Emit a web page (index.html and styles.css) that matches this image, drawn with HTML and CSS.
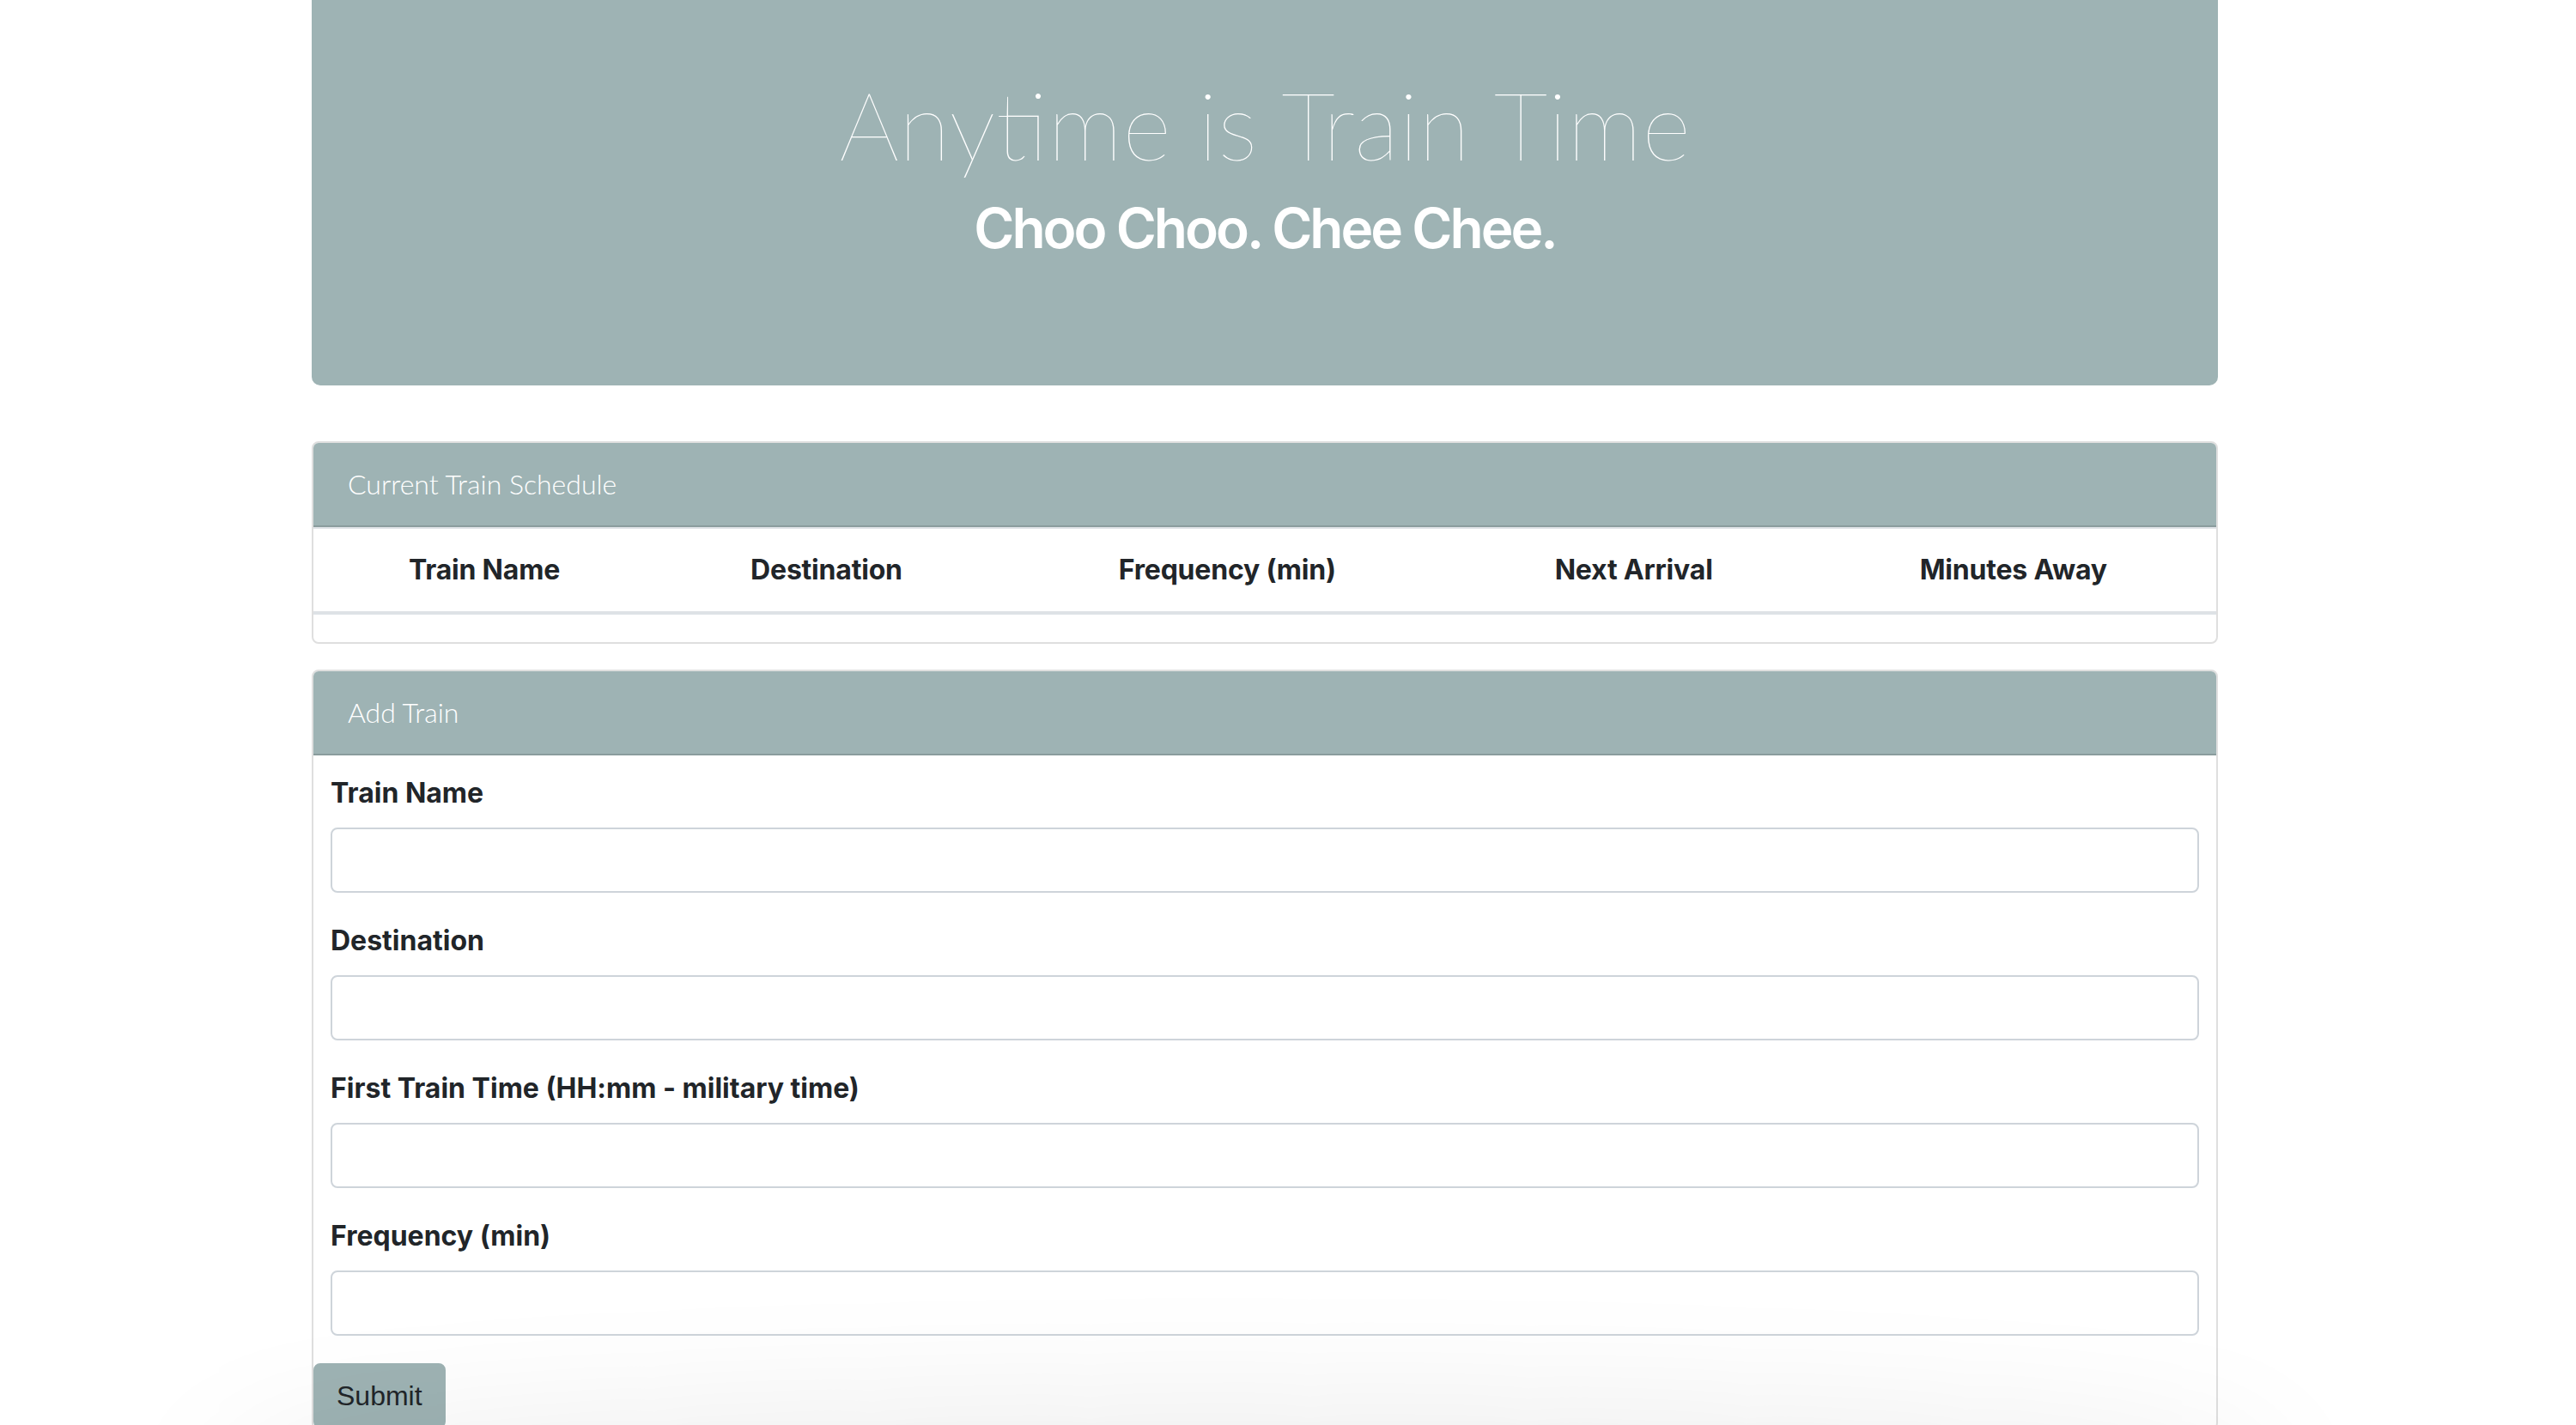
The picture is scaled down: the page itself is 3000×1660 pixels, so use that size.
FILE: index.html
```html
<!DOCTYPE html>
<html lang="en">
<head>
<meta charset="utf-8">
<title>Train Scheduler</title>
<link rel="stylesheet" href="styles.css">
</head>
<body>
<div class="container">
  <header class="jumbotron">
    <h1 class="title">Anytime is Train Time</h1>
    <h2 class="subtitle">Choo Choo. Chee Chee.</h2>
  </header>

  <section class="card">
    <div class="card-header">Current Train Schedule</div>
    <table class="table">
      <thead>
        <tr>
          <th>Train Name</th>
          <th>Destination</th>
          <th>Frequency (min)</th>
          <th>Next Arrival</th>
          <th>Minutes Away</th>
        </tr>
      </thead>
      <tbody></tbody>
    </table>
  </section>

  <section class="card">
    <div class="card-header">Add Train</div>
    <form class="train-form">
      <div class="fields">
        <div class="form-group">
          <label class="label">Train Name</label>
          <input class="form-control" type="text">
        </div>
        <div class="form-group">
          <label class="label">Destination</label>
          <input class="form-control" type="text">
        </div>
        <div class="form-group">
          <label class="label">First Train Time (HH:mm - military time)</label>
          <input class="form-control" type="text">
        </div>
        <div class="form-group">
          <label class="label">Frequency (min)</label>
          <input class="form-control" type="text">
        </div>
      </div>
      <button class="btn" type="button">Submit</button>
    </form>
  </section>
</div>
<div class="shade"></div>
</body>
</html>
```

FILE: styles.css
```css
html, body {
  margin: 0;
  padding: 0;
  background: #ffffff;
}

body {
  font-family: Inter, "Noto Sans", sans-serif;
  color: #212529;
  font-size: 32px;
  line-height: 1.5;
}

.container {
  width: 2220px;
  margin-left: 363px;
}

.jumbotron {
  background: #9eb3b4;
  border-radius: 0 0 10px 10px;
  padding: 78px 64px 128px;
  margin-bottom: 65px;
  text-align: center;
  color: #ffffff;
}

.title {
  margin: 0;
  font-family: Lato, sans-serif;
  font-weight: 200;
  font-size: 110px;
  line-height: 1.2;
}

.subtitle {
  margin: 18px 0 16px;
  font-family: Inter, sans-serif;
  font-weight: 600;
  font-size: 64px;
  line-height: 1.2;
  letter-spacing: -3px;
}

.card {
  border: 2px solid #dfdfdf;
  border-radius: 8px;
  margin-bottom: 30px;
  background: #ffffff;
  overflow: hidden;
}

.card-header {
  background: #9eb3b4;
  border-bottom: 2px solid #8a9c9d;
  color: #ffffff;
  padding: 24px 40px;
  font-family: Lato, sans-serif;
  font-weight: 300;
  font-size: 32px;
  line-height: 48px;
}

.table {
  width: 100%;
  border-collapse: collapse;
  margin-bottom: 32px;
}

.table th {
  text-align: center;
  font-weight: 700;
  letter-spacing: -0.2px;
  padding: 24px;
  line-height: 48px;
  border-top: 2px solid #dee2e6;
  border-bottom: 4px solid #dee2e6;
}

.train-form {
  margin: 0;
}

.fields {
  padding: 20px 20px 0;
}

.form-group {
  margin-bottom: 32px;
}

.label {
  display: block;
  font-weight: 700;
  letter-spacing: 0;
  margin-bottom: 16px;
  line-height: 48px;
}

.form-control {
  display: block;
  box-sizing: border-box;
  width: 100%;
  height: 76px;
  border: 2px solid #ced4da;
  border-radius: 8px;
  background: #ffffff;
  margin: 0;
}

.btn {
  display: block;
  margin: 0;
  background: #9eb3b4;
  border: 2px solid #9eb3b4;
  border-radius: 8px;
  color: #212529;
  font-family: "Liberation Sans", Arial, sans-serif;
  font-size: 32px;
  line-height: 48px;
  padding: 12px 25px;
}

.shade {
  position: fixed;
  left: 300px;
  width: 2300px;
  top: 1700px;
  height: 60px;
  border-radius: 50%;
  box-shadow: 0 0 160px 60px rgba(0, 0, 0, 0.08);
  pointer-events: none;
}
```
